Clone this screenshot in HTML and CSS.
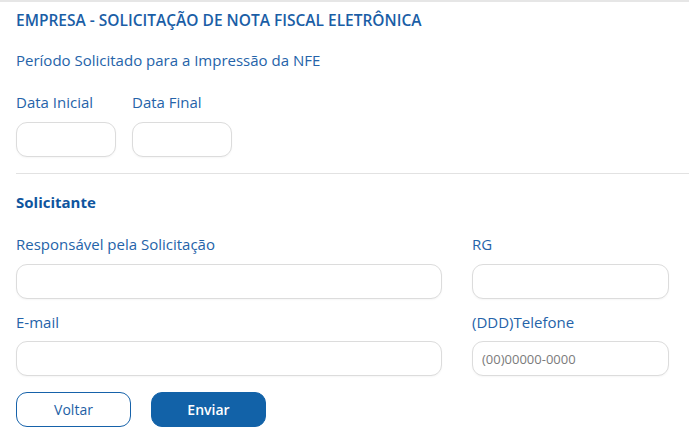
FILE: index.html
```html
<!DOCTYPE html>
<html lang="pt-BR">
<head>
    <meta charset="UTF-8">
    <meta name="viewport" content="width=device-width, initial-scale=1.0">
    <title>Solicitação de NFE</title>
    <link rel="stylesheet" href="styles.css">
</head>
<body>
    <form class="nfe-form">
        <h1 class="form-title">EMPRESA - SOLICITAÇÃO DE NOTA FISCAL ELETRÔNICA</h1>
        <p class="form-subtitle">Período Solicitado para a Impressão da NFE</p>

        <div class="date-row">
            <div class="field">
                <label class="field-label" for="dataInicial">Data Inicial</label>
                <input class="field-input" type="text" id="dataInicial">
            </div>
            <div class="field">
                <label class="field-label" for="dataFinal">Data Final</label>
                <input class="field-input" type="text" id="dataFinal">
            </div>
        </div>

        <hr class="divider">

        <h2 class="section-title">Solicitante</h2>

        <div class="requester-grid">
            <div class="field">
                <label class="field-label" for="responsavel">Responsável pela Solicitação</label>
                <input class="field-input" type="text" id="responsavel">
            </div>
            <div class="field">
                <label class="field-label" for="rg">RG</label>
                <input class="field-input" type="text" id="rg">
            </div>
            <div class="field">
                <label class="field-label" for="email">E-mail</label>
                <input class="field-input" type="text" id="email">
            </div>
            <div class="field">
                <label class="field-label" for="telefone">(DDD)Telefone</label>
                <input class="field-input" type="text" id="telefone" placeholder="(00)00000-0000">
            </div>
        </div>

        <div class="actions">
            <button type="button" class="btn btn-outline">Voltar</button>
            <button type="button" class="btn btn-primary">Enviar</button>
        </div>
    </form>
</body>
</html>
```

FILE: styles.css
```css
* {
    margin: 0;
    padding: 0;
    box-sizing: border-box;
}

body {
    font-family: 'Open Sans', 'Noto Sans', 'Liberation Sans', sans-serif;
    background: #ffffff;
    color: #1d63ad;
}

.nfe-form {
    border-top: 2px solid #e6e6e6;
    padding-left: 16px;
}

.form-title {
    font-size: 15.5px;
    font-weight: 600;
    line-height: 20px;
    color: #1a5ea6;
    padding-top: 8px;
}

.form-subtitle {
    font-size: 15px;
    line-height: 20px;
    margin-top: 20px;
    color: #2563a9;
}

.date-row {
    display: flex;
    gap: 16px;
    margin-top: 22px;
}

.date-row .field {
    width: 100px;
}

.field {
    display: flex;
    flex-direction: column;
}

.field-label {
    font-size: 15px;
    line-height: 20px;
    color: #2563a9;
    margin-bottom: 10px;
}

.field-input {
    height: 35px;
    width: 100%;
    border: 1px solid #dcdcdc;
    border-radius: 11px;
    padding: 0 9px;
    font-family: inherit;
    font-size: 13px;
    color: #333;
    background: #fff;
    box-shadow: 0 1px 2px rgba(0, 0, 0, 0.04);
    outline: none;
}

.field-input::placeholder {
    color: #7b7b7b;
}

.divider {
    border: none;
    border-top: 1px solid #e2e2e2;
    margin-top: 16px;
}

.section-title {
    font-size: 15px;
    font-weight: 700;
    line-height: 20px;
    color: #0f559e;
    margin-top: 18px;
}

.requester-grid {
    display: grid;
    grid-template-columns: 426px 197px;
    column-gap: 30px;
    row-gap: 13px;
    margin-top: 22px;
}

.requester-grid .field:nth-child(n+3) .field-label {
    margin-bottom: 9px;
}

.actions {
    display: flex;
    gap: 20px;
    margin-top: 16px;
}

.btn {
    height: 35px;
    border-radius: 11px;
    font-family: inherit;
    font-size: 14px;
    cursor: pointer;
}

.btn-outline {
    width: 115px;
    background: #fff;
    border: 1px solid #1662aa;
    color: #1d5fa5;
}

.btn-primary {
    width: 115px;
    background: #1262a8;
    border: 1px solid #1262a8;
    color: #fff;
    font-weight: 600;
}
```
